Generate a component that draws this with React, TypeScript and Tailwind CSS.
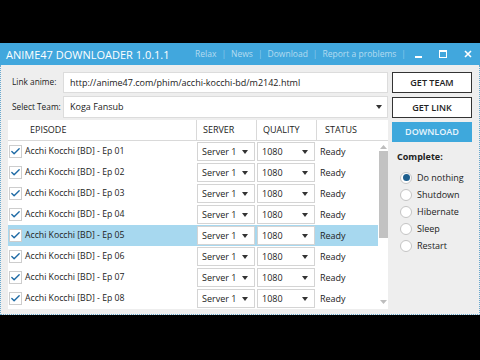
import { Check } from "lucide-react";

const episodes = ["01", "02", "03", "04", "05", "06", "07", "08"];
const options = ["Do nothing", "Shutdown", "Hibernate", "Sleep", "Restart"];
const menu = ["Relax", "News", "Download", "Report a problems"];

function Arrow({ className = "" }: { className?: string }) {
  return (
    <svg width="6" height="4" viewBox="0 0 6 4" className={className}>
      <path d="M0 0h6L3 4z" fill="#333" />
    </svg>
  );
}

// Small combo box used inside the grid rows
function Combo({ value }: { value: string }) {
  return (
    <div className="flex h-[19px] w-[58px] items-center justify-between border border-[#d4d4d4] bg-white pl-[4px] pr-[6px]">
      <span>{value}</span>
      <Arrow />
    </div>
  );
}

function Row({ ep, selected }: { ep: string; selected: boolean }) {
  return (
    <div
      className={
        "flex h-[21px] items-center " + (selected ? "bg-[#a7d8ef]" : "bg-white")
      }
    >
      <div className="flex w-[188px] items-center">
        <div className="ml-[1px] flex h-[13px] w-[13px] items-center justify-center border border-[#cdcdcd] bg-white">
          <Check size={11} strokeWidth={3} className="text-[#1d6aa5]" />
        </div>
        <span className="ml-[3px] whitespace-nowrap text-[8.7px]">Acchi Kocchi [BD] - Ep {ep}</span>
      </div>
      <div className="w-[61px] pl-[1px]">
        <Combo value="Server 1" />
      </div>
      <div className="w-[60px]">
        <Combo value="1080" />
      </div>
      <div className="flex-1 pl-[3px]">Ready</div>
    </div>
  );
}

export default function App() {
  return (
    <div className="h-[360px] w-[480px] overflow-hidden bg-black pt-[43px] font-['Open_Sans',sans-serif] text-[9px] text-[#222]">
      <div className="flex h-[272px] flex-col">
        {/* Title bar */}
        <div className="flex h-[22px] items-center whitespace-nowrap bg-[#41a7dd] pl-[6px] pr-[8px] text-white">
          <span className="text-[11px] leading-none">ANIME47 DOWNLOADER 1.0.1.1</span>
          <div className="ml-auto flex items-center text-[8.5px] text-white/60">
            {menu.map((m, i) => (
              <span key={m} className="flex items-center">
                {i > 0 && <span className="mx-[5px] text-white/40">|</span>}
                {m}
              </span>
            ))}
            <span className="ml-[5px] text-white/40">|</span>
          </div>
          <div className="ml-[9px] flex items-center gap-[17px]">
            <div className="mt-[6px] h-[2px] w-[7px] bg-white" />
            <div className="h-[8px] w-[8px] border border-t-2 border-white" />
            <svg width="8" height="8" viewBox="0 0 8 8">
              <path d="M1 1l6 6M7 1L1 7" stroke="white" strokeWidth="1.6" />
            </svg>
          </div>
        </div>

        {/* Body */}
        <div className="flex flex-1 gap-[4px] border-x border-b border-dotted border-[#6aa9cf] bg-[#eeeeee] pl-[7px] pr-[6px] pt-[7px]">
          <div className="flex w-[380px] flex-col">
            <div className="flex h-[21px] items-center">
              <span className="w-[55px] whitespace-nowrap pl-[4px] text-[8.3px]">Link anime:</span>
              <div className="flex h-[21px] flex-1 items-center border border-[#dcdcdc] bg-white pl-[6px]">
                http://anime47.com/phim/acchi-kocchi-bd/m2142.html
              </div>
            </div>
            <div className="mt-[3px] flex h-[22px] items-center">
              <span className="w-[55px] whitespace-nowrap pl-[4px] text-[8.3px]">Select Team:</span>
              <div className="flex h-[22px] flex-1 items-center justify-between border border-[#dcdcdc] bg-white pl-[6px] pr-[5px]">
                <span>Koga Fansub</span>
                <Arrow />
              </div>
            </div>

            {/* Grid */}
            <div className="mt-[2px] h-[189px] overflow-hidden bg-white">
              <div className="flex h-[21px] items-center border-b border-[#d9d9d9]">
                <div className="flex h-full w-[189px] items-center border-r border-[#d9d9d9] pl-[22px]">EPISODE</div>
                <div className="flex h-full w-[60px] items-center border-r border-[#d9d9d9] pl-[6px]">SERVER</div>
                <div className="flex h-full w-[60px] items-center border-r border-[#d9d9d9] pl-[6px]">QUALITY</div>
                <div className="flex h-full items-center pl-[8px]">STATUS</div>
              </div>
              <div className="flex">
                <div className="w-[370px]">
                  {episodes.map((e) => (
                    <Row key={e} ep={e} selected={e === "05"} />
                  ))}
                </div>
                <div className="flex w-[10px] flex-col items-center">
                  <svg width="7" height="4" viewBox="0 0 7 4" className="mt-[4px]">
                    <path d="M0 4h7L3.5 0z" fill="#bdbdbd" />
                  </svg>
                  <div className="mt-[2px] h-[87px] w-[9px] bg-[#c2c2c2]" />
                  <svg width="7" height="4" viewBox="0 0 7 4" className="mt-auto mb-[5px]">
                    <path d="M0 0h7L3.5 4z" fill="#bdbdbd" />
                  </svg>
                </div>
              </div>
            </div>
          </div>

          {/* Right panel */}
          <div className="flex w-[80px] flex-col">
            <button className="h-[21px] border border-[#333] bg-white text-[9px] font-semibold">GET TEAM</button>
            <button className="mt-[4px] h-[21px] border border-[#333] bg-white text-[9px] font-semibold">GET LINK</button>
            <button className="mt-[4px] h-[20px] bg-[#3ea8dc] text-[9px] font-semibold text-[#e9f5fc]">DOWNLOAD</button>
            <div className="mt-[8px] pl-[5px] font-bold">Complete:</div>
            <div className="mt-[8px] flex flex-col gap-[5px] pl-[8px]">
              {options.map((o, i) => (
                <div key={o} className="flex h-[12px] items-center gap-[5px]">
                  <div className="flex h-[12px] w-[12px] items-center justify-center rounded-full border border-[#c4c4c4] bg-white">
                    {i === 0 && <div className="h-[7px] w-[7px] rounded-full bg-[#1e5f8e]" />}
                  </div>
                  <span>{o}</span>
                </div>
              ))}
            </div>
          </div>
        </div>
      </div>
    </div>
  );
}
